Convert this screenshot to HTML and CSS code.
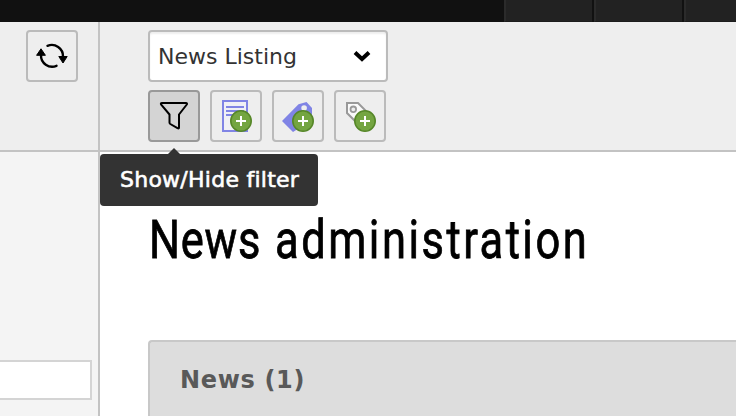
FILE: index.html
```html
<!DOCTYPE html>
<html lang="en">
<head>
<meta charset="utf-8">
<title>News administration</title>
<link rel="stylesheet" href="styles.css">
</head>
<body>
<nav class="topbar"><span class="cell"></span><span class="cell"></span><span class="cell"></span></nav>
<div class="layout">
  <aside class="side">
    <div class="side-head">
      <button class="btn" aria-label="Refresh">
        <svg viewBox="0 0 52 52"><g fill="none" stroke="#000" stroke-width="2.4" stroke-linecap="round"><path d="M21.5 15.8A11.2 11.2 0 0 1 37 26.5"/><path d="M30.5 35.8A11.2 11.2 0 0 1 15 25"/></g><path d="M10.6 25.3 15 18.8l4.4 6.5zM32.8 26.5H41.2L37 33z" stroke="#000" stroke-linejoin="round"/></svg>
      </button>
    </div>
    <div class="side-body"><div class="search"></div></div>
  </aside>
  <main class="main">
    <header class="head">
      <div class="select"><span class="select-text">News Listing</span>
        <svg class="chevron" viewBox="0 0 18 12"><path d="M2 2.5 9 9l7-6.5" fill="none" stroke="#000" stroke-width="4"/></svg>
      </div>
      <div class="tools">
        <button class="btn active" aria-label="Filter">
          <svg viewBox="0 0 52 52"><path d="M14 13H38Q39.5 13 38.8 14.5L31 24.5V37.5Q31 39 29.5 38.2L22.3 34Q21.5 33.5 21.5 32.5V24.5L13.2 14.7Q12.2 13 14 13Z" fill="none" stroke="#000" stroke-width="2" stroke-linejoin="round"/></svg>
        </button>
        <button class="btn" aria-label="New article">
          <svg viewBox="0 0 52 52"><path d="M13 11H37V41H13Z" fill="#f0f0f5" stroke="#8084e5" stroke-width="2"/><path d="M16 17h18M16 21h18M16 25h8" stroke="#8084e5" stroke-width="2"/><circle cx="31" cy="31" r="10.2" fill="#74a541" stroke="#568728" stroke-width="1.6"/><path d="M26 31h10M31 26v10" stroke="#fff" stroke-width="2"/></svg>
        </button>
        <button class="btn" aria-label="New category">
          <svg viewBox="0 0 52 52"><path d="M10 31 26.5 14.3 34.5 12 40 18V30L21 42ZM29.3 18a2.8 2.8 0 1 0 5.6 0 2.8 2.8 0 1 0-5.6 0Z" fill="#8084e5" fill-rule="evenodd"/><circle cx="31" cy="31" r="10.2" fill="#74a541" stroke="#568728" stroke-width="1.6"/><path d="M26 31h10M31 26v10" stroke="#fff" stroke-width="2"/></svg>
        </button>
        <button class="btn" aria-label="New tag">
          <svg viewBox="0 0 52 52"><path d="M13 13h11l15 15-9 12-17-17z" fill="#fafafa" stroke="#999" stroke-width="2"/><circle cx="19.3" cy="19.3" r="2.8" fill="#eee" stroke="#999" stroke-width="1.8"/><circle cx="31" cy="31" r="10.2" fill="#74a541" stroke="#568728" stroke-width="1.6"/><path d="M26 31h10M31 26v10" stroke="#fff" stroke-width="2"/></svg>
        </button>
        <div class="tooltip"><span class="tooltip-text">Show/Hide filter</span></div>
      </div>
    </header>
    <section class="content">
      <h1><span class="title"><span class="lead">News </span>administration</span></h1>
      <div class="panel"><span class="panel-text">News (1)</span></div>
    </section>
  </main>
</div>
</body>
</html>
```
FILE: styles.css
```css
* { box-sizing: border-box; }
body { margin: 0; height: 416px; overflow: hidden; background: #fff; font-family: "DejaVu Sans", Verdana, sans-serif; }
.topbar { height: 22px; background: #111; display: flex; gap: 2px; padding-left: 504px; }
.cell { flex: 0 0 88px; background: #222; border-left: 2px solid #2b2b2b; border-bottom: 1px solid #1c1c1c; }
.cell:last-child { flex: 1; }
.layout { display: flex; height: 394px; }
.side { width: 100px; flex: none; border-right: 2px solid #c3c3c3; background: #f4f4f4; }
.side-head { height: 130px; padding: 8px 0 0 26px; background: #eee; border-bottom: 2px solid #c3c3c3; }
.side-body { padding-top: 208px; }
.search { width: 92px; height: 40px; background: #fff; border: 2px solid #d4d4d4; border-left: 0; }
.main { flex: 1; min-width: 0; }
.head { height: 130px; padding: 8px 0 0 48px; background: #eee; border-bottom: 2px solid #c3c3c3; }
.btn { display: block; width: 52px; height: 52px; padding: 0; border: 2px solid #bbb; border-radius: 4px; background: #eee; }
.btn svg { display: block; width: 52px; height: 52px; margin: -2px; }
.btn.active { background: #d4d4d4; border-color: #999; }
.select { width: 240px; height: 52px; display: flex; align-items: center; justify-content: space-between; padding: 0 15px 0 8px; border: 2px solid #bbb; border-radius: 4px; background: #fff; box-shadow: inset 0 2px 2px #eee; color: #333; font-size: 22px; white-space: nowrap; }
.chevron { width: 18px; height: 12px; }
.tools { position: relative; display: flex; gap: 10px; margin-top: 8px; }
.tooltip { position: absolute; z-index: 1; left: -48px; top: 64px; width: 218px; height: 52px; border-radius: 4px; background: #333; color: #fff; font-size: 22px; line-height: 52px; padding-left: 20px; white-space: nowrap; letter-spacing: .25px; -webkit-text-stroke: .6px #fff; }
.tooltip::before { content: ""; position: absolute; left: 68px; top: -6px; border: 6px solid transparent; border-top: 0; border-bottom-color: #333; }
.content { padding-left: 48px; }
h1 { margin: 0; height: 188px; padding: 55px 0 0 1px; font: 400 53px/66px Roboto, sans-serif; color: #000; white-space: nowrap; -webkit-text-stroke: .8px #000; }
.title { display: inline-block; transform: scaleX(.82); transform-origin: left; letter-spacing: 3.05px; }
.lead { letter-spacing: .9px; word-spacing: 3px; }
.panel { height: 76px; border: 2px solid #c8c8c8; border-width: 2px 0 0 2px; border-radius: 4px 0 0 0; background: #ddd; padding-left: 30px; color: #595959; font-size: 24px; font-weight: 700; line-height: 76px; letter-spacing: .65px; }
```
